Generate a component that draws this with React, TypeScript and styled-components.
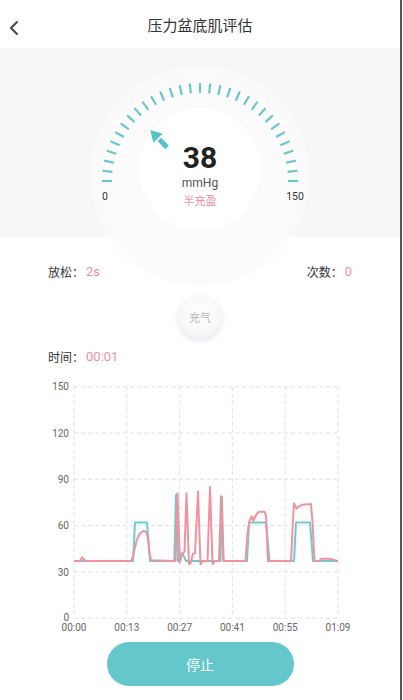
import React from "react";
import styled, { createGlobalStyle } from "styled-components";

const Global = createGlobalStyle`
  html, body { margin: 0; padding: 0; background: #fff; }
  body { font-family: "Roboto", "Noto Sans CJK SC", sans-serif; }
  * { box-sizing: border-box; }
`;

const TEAL = "#63c7cc";
const PINK = "#f08f9c";

const Frame = styled.div`
  width: 402px;
  height: 700px;
  border-right: 2px solid #555;
  background: #fff;
  display: flex;
  flex-direction: column;
  overflow: hidden;
`;

const Header = styled.header`
  height: 48px;
  flex: none;
  display: flex;
  align-items: center;
  justify-content: center;
  position: relative;
`;

const BackButton = styled.button`
  position: absolute;
  left: 7px;
  top: 19px;
  width: 14px;
  height: 18px;
  padding: 0;
  border: none;
  background: none;
  display: flex;
`;

const Title = styled.h1`
  margin: 0;
  font-size: 15px;
  font-weight: 400;
  color: #333;
  font-family: "Noto Sans CJK SC", sans-serif;
`;

const GaugeSection = styled.section`
  height: 189px;
  flex: none;
  background: #f7f7f7;
  position: relative;
`;

const Halo = styled.div`
  position: absolute;
  left: 90px;
  top: 18px;
  width: 220px;
  height: 220px;
  border-radius: 50%;
  background: radial-gradient(
    circle,
    #fcfcfc 0%,
    #fbfbfb 55%,
    rgba(250, 250, 250, 0.6) 80%,
    rgba(250, 250, 250, 0) 100%
  );
`;

const TickLayer = styled.svg`
  position: absolute;
  left: 0;
  top: 0;
`;

const Disc = styled.div`
  position: absolute;
  left: 139px;
  top: 60px;
  width: 122px;
  height: 122px;
  border-radius: 50%;
  background: #fff;
  box-shadow: 0 0 8px rgba(0, 0, 0, 0.015);
  display: flex;
  flex-direction: column;
  align-items: center;
  padding-top: 35px;
`;

const Value = styled.div`
  font-size: 30px;
  line-height: 30px;
  font-weight: 700;
  color: #222;
`;

const Unit = styled.div`
  margin-top: 2px;
  font-size: 12px;
  line-height: 16px;
  color: #555;
`;

const State = styled.div`
  margin-top: 1px;
  font-size: 11px;
  line-height: 16px;
  color: ${PINK};
  font-family: "Noto Sans CJK SC", sans-serif;
`;

const StatRow = styled.div<{ $top: number }>`
  position: relative;
  margin-top: ${(p) => p.$top}px;
  height: 20px;
  padding: 0 48px;
  display: flex;
  justify-content: space-between;
  align-items: center;
  flex: none;
`;

const Stat = styled.div`
  font-size: 12px;
  line-height: 20px;
  color: #333;
  font-family: "Noto Sans CJK SC", sans-serif;
  display: flex;
  align-items: center;
`;

const StatValue = styled.span`
  color: ${PINK};
  font-size: 13px;
  font-family: "Roboto", sans-serif;
  margin-left: 2px;
`;

const InflateButton = styled.button`
  position: relative;
  margin: 13px auto 0;
  width: 44px;
  height: 44px;
  flex: none;
  border-radius: 50%;
  border: none;
  background: radial-gradient(circle at 50% 40%, #ffffff 0%, #f7f8fa 55%, #e6e8ee 100%);
  box-shadow: 0 2px 5px rgba(120, 130, 150, 0.22);
  color: #b8b8b8;
  font-size: 11px;
  font-family: "Noto Sans CJK SC", sans-serif;
  padding: 0;
`;

const ChartSvg = styled.svg`
  display: block;
  flex: none;
`;

const StopButton = styled.button`
  margin: 5px auto 0;
  width: 187px;
  height: 44px;
  flex: none;
  border: none;
  border-radius: 22px;
  background: ${TEAL};
  color: #fff;
  font-size: 14px;
  font-family: "Noto Sans CJK SC", sans-serif;
`;

const CX = 200;
const CY = 133;

function Gauge() {
  const ticks = [];
  for (let i = 0; i <= 30; i++) {
    const t = (Math.PI * i) / 30;
    const dx = -Math.cos(t);
    const dy = -Math.sin(t);
    ticks.push(
      <line
        key={i}
        x1={CX + dx * 88}
        y1={CY + dy * 88}
        x2={CX + dx * 98}
        y2={CY + dy * 98}
        stroke="#66c8cd"
        strokeWidth={2.2}
      />
    );
  }
  const th = ((38 / 150) * 180 * Math.PI) / 180;
  const d = [-Math.cos(th), -Math.sin(th)];
  const p = [-d[1], d[0]];
  const pt = (r: number, w = 0) => `${CX + d[0] * r + p[0] * w},${CY + d[1] * r + p[1] * w}`;
  return (
    <TickLayer width={400} height={189} viewBox="0 0 400 189">
      {ticks}
      <polygon points={`${pt(71)} ${pt(60, 6.5)} ${pt(60, -6.5)}`} fill="#55c2c7" />
      <line
        x1={CX + d[0] * 47}
        y1={CY + d[1] * 47}
        x2={CX + d[0] * 58}
        y2={CY + d[1] * 58}
        stroke="#55c2c7"
        strokeWidth={5}
      />
      <text x={105} y={152} fontSize={10.5} fill="#333" textAnchor="middle" fontFamily="Roboto">0</text>
      <text x={295} y={152} fontSize={10.5} fill="#333" textAnchor="middle" fontFamily="Roboto">150</text>
    </TickLayer>
  );
}

const X0 = 74;
const X1 = 338;
const YT = 19.7;
const YB = 251.2;
const yv = (v: number) => YB - (v * (YB - YT)) / 150;

const teal: [number, number][] = [
  [74, 37], [133, 37], [135, 62], [147, 62], [150, 37], [174.3, 37], [176, 80], [178, 37],
  [180, 37], [182, 42], [184, 40], [186, 37], [220.5, 37], [222, 78.5], [223.5, 37],
  [247, 37], [249, 62], [266, 62], [269.5, 37], [294, 37], [296, 62], [310, 62], [313, 37], [338, 37],
];

const pink: [number, number][] = [
  [74, 37], [80, 37], [82, 39.5], [84, 38], [86, 37], [131, 37], [133, 40], [135, 46], [137, 51],
  [140, 55], [143, 56.5], [146, 56], [148, 52], [149.5, 42], [151, 37.5], [175.5, 37], [177.5, 81],
  [180, 36], [182, 42], [184.5, 43], [186.5, 81], [189, 35], [191, 36], [193, 42], [195, 42],
  [198, 82], [200.5, 35], [203, 37], [207.5, 37], [210, 85], [212.5, 35], [215, 37], [219, 37],
  [221, 79], [223.5, 37], [245.5, 37], [247.5, 55], [249.5, 63], [251.5, 66], [253.5, 63],
  [256, 67], [259, 69], [264.5, 69], [266, 66], [268, 37], [291, 37], [292.5, 58], [294, 74.5],
  [296.5, 71], [299, 72.5], [302, 73.5], [311, 74], [312.5, 62], [314.5, 37], [319, 37],
  [321, 38.5], [330, 38.5], [338, 37],
];

const toPath = (pts: [number, number][]) => pts.map(([x, v], i) => `${i ? "L" : "M"}${x},${yv(v).toFixed(1)}`).join(" ");

const xTicks = ["00:00", "00:13", "00:27", "00:41", "00:55", "01:09"];
const yTicks = [0, 30, 60, 90, 120, 150];

function Chart() {
  const xs = xTicks.map((_, i) => X0 + ((X1 - X0) * i) / 5);
  return (
    <ChartSvg width={400} height={270} viewBox="0 0 400 270">
      {yTicks.map((v) => (
        <g key={v}>
          <line x1={X0} x2={X1} y1={yv(v)} y2={yv(v)} stroke="#dfe0ee" strokeWidth={1} strokeDasharray="4 3" />
          <text x={69} y={yv(v) + (v === 0 ? 3 : 3.6)} fontSize={10} fill="#666" textAnchor="end" fontFamily="Roboto">{v}</text>
        </g>
      ))}
      {xs.map((x, i) => (
        <g key={i}>
          <line x1={x} x2={x} y1={YT} y2={YB} stroke="#dfe0ee" strokeWidth={1} strokeDasharray="4 3" />
          <text x={x} y={264} fontSize={10} fill="#666" textAnchor="middle" fontFamily="Roboto">{xTicks[i]}</text>
        </g>
      ))}
      <path d={toPath(teal)} fill="none" stroke="#6ccbd0" strokeWidth={2} strokeLinejoin="round" />
      <path d={toPath(pink)} fill="none" stroke="#f3919e" strokeWidth={2} strokeLinejoin="round" />
    </ChartSvg>
  );
}

export default function App() {
  return (
    <>
      <Global />
      <Frame>
        <Header>
          <BackButton aria-label="back">
            <svg width="14" height="18" viewBox="0 0 14 18">
              <polyline points="10,3 4,9 10,15" fill="none" stroke="#444" strokeWidth="2" strokeLinecap="round" strokeLinejoin="round" />
            </svg>
          </BackButton>
          <Title>压力盆底肌评估</Title>
        </Header>
        <GaugeSection>
          <Halo />
          <Disc>
            <Value>38</Value>
            <Unit>mmHg</Unit>
            <State>半充盈</State>
          </Disc>
          <Gauge />
        </GaugeSection>
        <StatRow $top={25}>
          <Stat>放松：<StatValue>2s</StatValue></Stat>
          <Stat>次数：<StatValue>0</StatValue></Stat>
        </StatRow>
        <InflateButton>充气</InflateButton>
        <StatRow $top={8}>
          <Stat>时间：<StatValue>00:01</StatValue></Stat>
        </StatRow>
        <Chart />
        <StopButton>停止</StopButton>
      </Frame>
    </>
  );
}
